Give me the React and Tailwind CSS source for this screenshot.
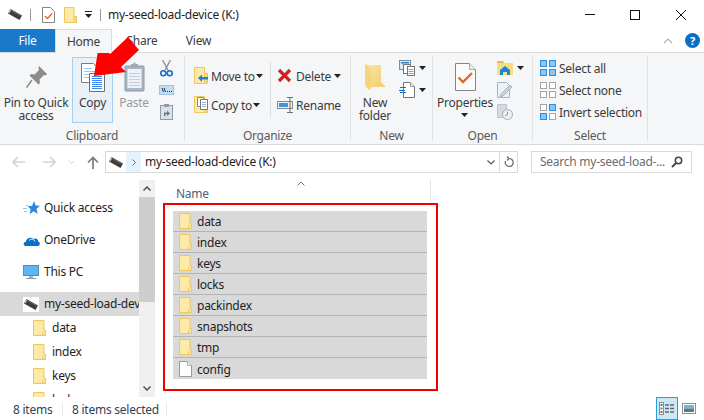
import React from "react";

const Caret = ({ className = "" }) => (
  <svg width="7" height="4" viewBox="0 0 7 4" className={className}><path d="M0 0h7L3.5 4z" fill="#222" /></svg>
);

const Drive = () => (
  <svg width="14" height="11" viewBox="0 0 14 11" className="shrink-0">
    <path d="M2.500 0L14 6.500 11.500 11 0 4.500z" fill="#3c3c3c" />
    <path d="M4 2L12.500 6.800" stroke="#6a6a6a" strokeWidth="1" />
    <path d="M.8 4.200L2.800 .8" stroke="#b5b5b5" strokeWidth="1.400" />
  </svg>
);

const SmallFolder = () => (
  <svg width="13" height="16" viewBox="0 0 13 16">
    <path d="M.5.5h10.500v15H.5z" fill="#fdeaa8" stroke="#efc75e" />
    <path d="M11 10.500h1.500v5H9.500v-3" fill="#fbe39a" stroke="#efc75e" />
  </svg>
);

const SmallFile = () => (
  <svg width="13" height="16" viewBox="0 0 13 16">
    <path d="M.5.5h8l4 4v11H.5z" fill="#fff" stroke="#9a9a9a" />
    <path d="M8.500.5v4h4" fill="#eee" stroke="#b5b5b5" />
  </svg>
);

const CopyIcon = () => (
  <svg width="24" height="29" viewBox="0 0 24 29">
    <path d="M.5.5h12l4 4v15H.5z" fill="#fff" stroke="#7d7d7d" />
    <path d="M3 5.500h8M3 8.500h11M3 11.500h11M3 14.500h11" stroke="#9cc3ee" />
    <path d="M8.500 10.500h15v18h-15z" fill="#fff" stroke="#6f6f6f" />
    <path d="M11 13.500h10M11 15.500h10M11 17.500h10M11 19.500h10M11 21.500h10M11 23.500h10M11 25.500h10" stroke="#3f86ee" />
  </svg>
);

const PasteIcon = () => (
  <svg width="21" height="30" viewBox="0 0 21 30">
    <rect x="1" y="4" width="19" height="25" rx="1" fill="#a9b6c6" stroke="#8496ab" />
    <rect x="3.500" y="7" width="14" height="19" fill="#eef1f6" />
    <path d="M5 11.500h11M5 14.500h11M5 17.500h11M5 20.500h11M5 23.500h11" stroke="#c8d0dc" />
    <path d="M7 4V2h2.500V.5h2V2H14v3.500H7z" fill="#a2a9b3" />
  </svg>
);

const Pin = () => (
  <svg width="21" height="22" viewBox="0 0 21 22">
    <path d="M13 0l8 8-1.500 1.500-1.500-.5-4.500 4.500.5 3.500-1.500 1.500L3.500 9.500 5 8l3.500.5L13 4l-.5-1.500z" fill="#8c8c8c" />
    <path d="M6 14L.5 21.500" stroke="#8c8c8c" strokeWidth="1.500" />
  </svg>
);

const Scissors = () => (
  <svg width="13" height="17" viewBox="0 0 13 17">
    <path d="M2.500 0L8 10M10.500 0L5 10" stroke="#8a8a8a" strokeWidth="1.300" fill="none" />
    <circle cx="3.300" cy="13.300" r="2.500" fill="none" stroke="#1b6fc0" strokeWidth="1.600" />
    <circle cx="9.700" cy="13.300" r="2.500" fill="none" stroke="#1b6fc0" strokeWidth="1.600" />
  </svg>
);

const PathIcon = () => (
  <svg width="15" height="10" viewBox="0 0 15 10">
    <rect x=".5" y=".5" width="14" height="9" fill="#c3dcf5" stroke="#9cc3ea" />
    <path d="M3 3l1.500 4M5 3l1.500 4" stroke="#222" strokeWidth=".9" />
    <path d="M8 6.500h1M10 6.500h1M12 6.500h1" stroke="#333" />
  </svg>
);

const PasteShortcut = () => (
  <svg width="13" height="16" viewBox="0 0 13 16">
    <rect x=".5" y="1.500" width="12" height="14" fill="#dde2e9" stroke="#8e9cae" />
    <rect x="4" y="0" width="5" height="3" fill="#8e9cae" />
    <path d="M4 12V8.500h3V6.500l3 3-3 2.500V10H5.500v2z" fill="#64788f" />
  </svg>
);

const MoveTo = () => (
  <svg width="14" height="17" viewBox="0 0 14 17">
    <path d="M.5.5h10v16H.5z" fill="#fdeaa8" stroke="#efc75e" />
    <path d="M10.500 6.500h3v10h-3" fill="#f7d878" stroke="#efc75e" />
    <path d="M4 11l4-3.500V10h6v2.500H8V15z" fill="#2a7fd0" />
  </svg>
);

const CopyTo = () => (
  <svg width="14" height="17" viewBox="0 0 14 17">
    <path d="M.5.5h10v16H.5z" fill="#fdeaa8" stroke="#efc75e" />
    <path d="M10.500 6.500h3v10h-3" fill="#f7d878" stroke="#efc75e" />
    <path d="M3.500 1.500h6v9h-6z" fill="#fff" stroke="#888" />
    <path d="M6.500 3.500h7v10h-7z" fill="#fff" stroke="#777" />
    <path d="M8 6.500h4M8 8.500h4M8 10.500h4" stroke="#9ab7d8" />
  </svg>
);

const DeleteX = () => (
  <svg width="15" height="15" viewBox="0 0 15 15">
    <path d="M2 2l11 11M13 2L2 13" stroke="#d61f1f" strokeWidth="3.200" />
  </svg>
);

const Rename = () => (
  <svg width="17" height="16" viewBox="0 0 17 16">
    <rect x=".5" y="4.500" width="15" height="7" fill="#f1f1f1" stroke="#8a8a8a" />
    <rect x="2" y="6" width="9" height="4" fill="#3d93e6" />
    <path d="M10 .5h6M13 .5v15M10 15.500h6" stroke="#6d6d6d" fill="none" />
  </svg>
);

const NewFolder = () => (
  <svg width="21" height="28" viewBox="0 0 21 28">
    <defs>
      <linearGradient id="nf" x1="0" y1="0" x2="1" y2="1">
        <stop offset="0" stopColor="#fbe7a5" />
        <stop offset="1" stopColor="#f1cb69" />
      </linearGradient>
    </defs>
    <path d="M0 1l4 1h12v17l5 5H6l-2 3-4-4z" fill="url(#nf)" />
    <path d="M0 1l6 5v21l-6-6z" fill="#f4d47e" />
  </svg>
);

const NewItem = () => (
  <svg width="16" height="16" viewBox="0 0 16 16">
    <rect x=".5" y=".5" width="11" height="9" fill="#dbe9f7" stroke="#6f8fae" />
    <rect x="2" y="2" width="8" height="1.500" fill="#3a7fc2" />
    <rect x="4.500" y="4.500" width="7" height="9" fill="#fff" stroke="#777" />
    <rect x="8.500" y="6.500" width="7" height="9" fill="#fff" stroke="#777" />
    <path d="M9.500 9.500h5M9.500 11.500h5M9.500 13.500h5" stroke="#d08a7a" />
  </svg>
);

const NewDoc = () => (
  <svg width="16" height="16" viewBox="0 0 16 16">
    <path d="M4.500.5h7l4 4v11h-11z" fill="#fff" stroke="#777" />
    <path d="M11.500.5v4h4" fill="#eee" stroke="#999" />
    <path d="M1 5.500h6M0 8.500h6M1 10.500h6" stroke="#1f6fbf" />
  </svg>
);

const Properties = () => (
  <svg width="21" height="28" viewBox="0 0 21 28">
    <path d="M.5.5h14l6 6v21H.5z" fill="#fbfbfb" stroke="#858585" />
    <path d="M14.500.5v6h6" fill="#eee" stroke="#aaa" />
    <path d="M3.500 14.500l4.500 4.500 9-9" fill="none" stroke="#e8642c" strokeWidth="2.400" />
  </svg>
);

const OpenIcon = () => (
  <svg width="16" height="14" viewBox="0 0 16 14">
    <path d="M0 0h6l1 2h9v12H0z" fill="#f9dc7f" />
    <path d="M0 0h6l1 2H0z" fill="#e9bd4b" />
    <path d="M3 9l5-4 5 4v5h-3v-3H6v3H3z" fill="#1a84d8" />
  </svg>
);

const EditIcon = () => (
  <svg width="16" height="16" viewBox="0 0 16 16">
    <path d="M.5.5h9l3 3v12H.5z" fill="#eef1f5" stroke="#a9b4c2" />
    <path d="M4 12l9-9 2 2-9 9-3 1z" fill="#c6d2e0" stroke="#a9b4c2" />
  </svg>
);

const HistoryIcon = () => (
  <svg width="16" height="16" viewBox="0 0 16 16">
    <path d="M.5.5h9v13h-9z" fill="#d5dbe3" stroke="#bcc5d0" />
    <circle cx="10.500" cy="10.500" r="5" fill="#eef0f3" stroke="#a4acb6" />
    <path d="M10.500 7.500v3l-2.500 1.500" stroke="#8d96a1" fill="none" />
  </svg>
);

const Grid4 = ({ on }) => (
  <svg width="16" height="16" viewBox="0 0 16 16" className="shrink-0">
    {[[0, 0], [9, 0], [0, 9], [9, 9]].map(([x, y], i) =>
      on[i] ? (
        <rect key={i} x={x + 0.5} y={y + 0.5} width="6" height="6" fill="#8cc4f2" stroke="#2f8fdf" />
      ) : (
        <rect key={i} x={x + 0.5} y={y + 0.5} width="6" height="6" fill="#fff" stroke="#a5a5a5" />
      )
    )}
  </svg>
);

const Star = () => (
  <svg width="17" height="15" viewBox="0 0 17 15">
    <path d="M11 0l1.600 4.400 4.400.3-3.500 3 1.200 5.300-4-2.700-4.200 3 1.200-5-3-3 4.500-.5z" fill="#2b86dc" />
    <path d="M0 7.500h4M1 10.500h3M3 4.500h2" stroke="#8fc1ee" />
  </svg>
);

const Cloud = () => (
  <svg width="17" height="11" viewBox="0 0 17 11">
    <path d="M2.500 11C0 11 0 7 2.800 6.800 3.500 3 8 1.500 10.500 4c2.500-1.500 5 0 4.500 2.500 2.500.5 2.500 4.500-.5 4.500z" fill="#0a6fc8" />
    <path d="M6 5.500C8 3.500 11 4 12 6.500" stroke="#fff" fill="none" />
  </svg>
);

const Monitor = () => (
  <svg width="16" height="15" viewBox="0 0 16 15">
    <rect x=".5" y=".5" width="15" height="10" fill="#5cb8f2" stroke="#6f8698" />
    <path d="M6 11h4v2H6z" fill="#9eb0bf" />
    <path d="M3 13.500h10" stroke="#8b9dac" />
  </svg>
);

const Arrow = ({ flip }) => (
  <svg width="14" height="12" viewBox="0 0 14 12" className={flip ? "-scale-x-100" : ""}>
    <path d="M1 6h12M6 1L1 6l5 5" stroke="#d4d4d4" strokeWidth="1.600" fill="none" />
  </svg>
);

const Group = ({ w, label, children }) => (
  <div className={`flex flex-col h-[86px] mt-[2px] border-r border-[#e2e3e4] ${w}`}>
    <div className="flex h-[74px]">{children}</div>
    <div className="h-[12px] leading-[14px] text-center text-[#5a5a5a]">{label}</div>
  </div>
);

const Large = ({ w, icon, lines, active, muted, caret }) => (
  <div className={`${w} h-[66px] mt-[2px] flex flex-col items-center border ${active ? "bg-[#e8f0f8] border-[#a3cff3]" : "border-transparent"}`}>
    <div className="h-[38px] flex items-center justify-center shrink-0">{icon}</div>
    <div className={`text-center leading-[13px] whitespace-nowrap ${muted ? "text-[#9a9a9a]" : "text-[#3b3b3b]"}`}>
      {lines.map((l) => (
        <div key={l}>{l}</div>
      ))}
      {caret && <Caret className="mx-auto mt-[4px]" />}
    </div>
  </div>
);

const Stack = ({ children, className = "" }) => (
  <div className={`flex flex-col pt-[2px] ${className}`}>{children}</div>
);

const Cell = ({ children, className = "" }) => (
  <div className={`h-[22px] flex items-center ${className}`}>{children}</div>
);

const Wide = ({ icon, label, caret, iconW }) => (
  <div className="h-[29px] flex items-center whitespace-nowrap text-[#3b3b3b]">
    <div className={`${iconW} shrink-0 flex`}>{icon}</div>
    <span className="mt-[2px]">{label}</span>
    {caret && <Caret className={caret} />}
  </div>
);

const NavItem = ({ icon, label, iconW = "w-[21px]", className = "", pad = "pl-[23px]" }) => (
  <div className={`h-[24px] shrink-0 flex items-center whitespace-nowrap text-[#1e1e1e] ${pad} ${className}`}>
    <span className={`${iconW} shrink-0 flex`}>{icon}</span>
    <span>{label}</span>
  </div>
);

const files = ["data", "index", "keys", "locks", "packindex", "snapshots", "tmp", "config"];

export default function App() {
  return (
    <div
      className="relative w-[704px] h-[420px] overflow-hidden bg-white text-[12px] tracking-[-0.25px] text-[#1e1e1e]"
      style={{ fontFamily: '"Noto Sans", sans-serif' }}
    >
      {/* Title bar */}
      <div className="flex items-center h-[29px]">
        <div className="ml-[8px] flex"><Drive /></div>
        <div className="ml-[8px] w-px h-[12px] bg-[#9a9a9a]" />
        <div className="ml-[11px] flex"><svg width="13" height="16" viewBox="0 0 13 16"><path d="M.5.5h8l4 4v11H.5z" fill="#fff" stroke="#858585" /><path d="M3 9l2.500 2.500L10 6.500" stroke="#e8642c" strokeWidth="1.500" fill="none" /></svg></div>
        <div className="ml-[9px] flex"><svg width="13" height="16" viewBox="0 0 13 16"><path d="M.5.5h9.500v15H.5z" fill="#fdeaa8" stroke="#efc75e" /><path d="M10 9.500h2.500v6H10" fill="#f7d878" stroke="#efc75e" /></svg></div>
        <div className="ml-[8px] flex flex-col items-center gap-[2px]">
          <div className="w-[7px] h-px bg-[#222]" />
          <Caret />
        </div>
        <div className="ml-[8px] w-px h-[12px] bg-[#9a9a9a]" />
        <div className="ml-[7px] text-[#1e1e1e]">my-seed-load-device (K:)</div>
        <div className="ml-auto flex items-center">
          <div className="w-[10px] h-px bg-[#111]" />
          <div className="ml-[35px] w-[10px] h-[10px] border border-[#111]" />
          <svg className="ml-[36px] mr-[18px]" width="10" height="10" viewBox="0 0 10 10"><path d="M0 0l10 10M10 0L0 10" stroke="#111" /></svg>
        </div>
      </div>

      {/* Tabs */}
      <div className="flex h-[23px] items-stretch">
        <div className="w-[55px] bg-[#1979ca] text-white flex items-center justify-center">File</div>
        <div className="relative z-10 w-[57px] h-[24px] bg-[#f5f6f7] border-x border-t border-[#dadbdc] flex items-center justify-center text-[#3b3b3b]">Home</div>
        <div className="w-[60px] flex items-center justify-center text-[#3b3b3b]">Share</div>
        <div className="w-[53px] flex items-center justify-center text-[#3b3b3b]">View</div>
        <div className="ml-auto flex items-center mr-[4px]">
          <svg width="10" height="6" viewBox="0 0 10 6"><path d="M1 5l4-4 4 4" stroke="#b5b5b5" strokeWidth="1.200" fill="none" /></svg>
          <div className="ml-[12px] w-[15px] h-[15px] rounded-full bg-[#0a6fc2] text-white font-bold text-[11px] leading-[15px] text-center">?</div>
        </div>
      </div>

      {/* Ribbon */}
      <div className="flex h-[93px] bg-[#f5f6f7] border-y border-[#dadbdc]">
        <Group w="w-[185px]" label="Clipboard">
          <Large w="w-[72px]" icon={<Pin />} lines={["Pin to Quick", "access"]} />
          <Large w="w-[41px]" icon={<CopyIcon />} lines={["Copy"]} active />
          <Large w="w-[42px]" icon={<PasteIcon />} lines={["Paste"]} muted />
          <Stack className="w-[22px] items-center">
            <Cell><Scissors /></Cell>
            <Cell><PathIcon /></Cell>
            <Cell><PasteShortcut /></Cell>
          </Stack>
        </Group>
        <Group w="w-[166px]" label="Organize">
          <div className="w-[85px] pl-[9px] pt-[6px] flex flex-col">
            <Wide iconW="w-[17px]" icon={<MoveTo />} label="Move to" caret="ml-[1px]" />
            <Wide iconW="w-[17px]" icon={<CopyTo />} label="Copy to" caret="ml-[1px]" />
          </div>
          <div className="w-px h-[55px] mt-[7px] bg-[#dcdddf]" />
          <div className="pl-[6px] pt-[6px] flex flex-col">
            <Wide iconW="w-[19px]" icon={<DeleteX />} label="Delete" caret="ml-[3px]" />
            <Wide iconW="w-[19px]" icon={<Rename />} label="Rename" />
          </div>
        </Group>
        <Group w="w-[82px]" label="New">
          <Large w="w-[48px]" icon={<NewFolder />} lines={["New", "folder"]} />
          <Stack>
            <Cell className="gap-[4px]"><NewItem /><Caret /></Cell>
            <Cell className="gap-[4px]"><NewDoc /><Caret /></Cell>
          </Stack>
        </Group>
        <Group w="w-[100px]" label="Open">
          <Large w="w-[64px]" icon={<Properties />} lines={["Properties"]} caret />
          <Stack>
            <Cell className="gap-[4px]"><OpenIcon /><Caret /></Cell>
            <Cell><EditIcon /></Cell>
            <Cell><HistoryIcon /></Cell>
          </Stack>
        </Group>
        <Group w="w-[115px]" label="Select">
          <Stack className="pl-[7px] text-[#3b3b3b] whitespace-nowrap">
            <Cell className="gap-[3px]"><Grid4 on={[1, 1, 1, 1]} /><span className="mt-[2px]">Select all</span></Cell>
            <Cell className="gap-[3px]"><Grid4 on={[0, 0, 0, 0]} /><span className="mt-[2px]">Select none</span></Cell>
            <Cell className="gap-[3px]"><Grid4 on={[0, 1, 1, 0]} /><span className="mt-[2px]">Invert selection</span></Cell>
          </Stack>
        </Group>
      </div>

      {/* Address row */}
      <div className="flex items-start h-[35px] pt-[6px]">
        <div className="w-[105px] h-[22px] flex items-center shrink-0">
          <div className="ml-[12px] flex"><Arrow /></div>
          <div className="ml-[16px] flex"><Arrow flip /></div>
          <svg className="ml-[12px]" width="7" height="4" viewBox="0 0 7 4"><path d="M.5.5l3 3 3-3" stroke="#d4d4d4" fill="none" /></svg>
          <svg className="ml-[12px]" width="12" height="13" viewBox="0 0 12 13"><path d="M6 13V1.500M1 6.500l5-5 5 5" stroke="#7a7a7a" strokeWidth="1.700" fill="none" /></svg>
        </div>
        <div className="w-[413px] h-[22px] border border-[#d9d9d9] flex items-stretch">
          <div className="w-[20px] flex items-center justify-center"><Drive /></div>
          <div className="w-[15px] bg-[#e5f3ff] flex items-center justify-center">
            <svg width="4" height="7" viewBox="0 0 4 7"><path d="M.5.5l3 3-3 3" stroke="#666" fill="none" /></svg>
          </div>
          <div className="pl-[4px] flex items-center text-[#1e1e1e]">my-seed-load-device (K:)</div>
          <div className="ml-auto flex items-center">
            <svg width="8" height="5" viewBox="0 0 8 5"><path d="M.5.5L4 4 7.500.5" stroke="#555" strokeWidth="1.200" fill="none" /></svg>
            <div className="ml-[4px] w-px h-full bg-[#d9d9d9]" />
            <svg className="ml-[4px] mr-[3px]" width="10" height="12" viewBox="0 0 10 12"><path d="M5 2.500A4 4 0 1 1 1.500 5M3 .5L5 2.500 3 4.500" stroke="#666" strokeWidth="1.200" fill="none" /></svg>
          </div>
        </div>
        <div className="ml-[13px] w-[161px] h-[22px] border border-[#d9d9d9] flex items-center pl-[8px] text-[#6d6d6d]">
          <span>Search my-seed-load-...</span>
          <svg className="ml-auto mr-[8px]" width="12" height="12" viewBox="0 0 12 12"><circle cx="7.500" cy="4.500" r="3.200" stroke="#444" strokeWidth="1.500" fill="none" /><path d="M5 7L1 11" stroke="#444" strokeWidth="1.800" /></svg>
        </div>
      </div>

      {/* Body */}
      <div className="flex h-[217px]">
        <div className="w-[139px] shrink-0 overflow-hidden pt-[16px] flex flex-col">
          <NavItem icon={<Star />} label="Quick access" />
          <NavItem className="mt-[8px]" icon={<Cloud />} label="OneDrive" />
          <NavItem className="mt-[8px]" icon={<Monitor />} label="This PC" />
          <NavItem
            className="mt-[8px] bg-[#d9d9d9]"
            icon={<span className="w-[16px] h-[15px] bg-white flex items-center justify-center"><Drive /></span>}
            label="my-seed-load-device (K:)"
          />
          {["data", "index", "keys", "locks"].map((f) => (
            <NavItem key={f} pad="pl-[33px]" iconW="w-[19px]" icon={<SmallFolder />} label={f} />
          ))}
        </div>
        <div className="w-[16px] shrink-0 bg-[#f0f0f0] flex flex-col">
          <div className="h-[17px] flex items-center justify-center">
            <svg width="8" height="5" viewBox="0 0 8 5"><path d="M.5 4.500L4 1l3.500 3.500" stroke="#505050" strokeWidth="1.500" fill="none" /></svg>
          </div>
          <div className="h-[105px] bg-[#cdcdcd]" />
          <div className="flex-1" />
          <div className="h-[17px] flex items-center justify-center">
            <svg width="8" height="5" viewBox="0 0 8 5"><path d="M.5.5L4 4 7.500.5" stroke="#505050" strokeWidth="1.500" fill="none" /></svg>
          </div>
        </div>
        <div className="flex-1 min-w-0">
          <div className="w-[276px] h-[23px] border-r border-[#e5e5e5] pl-[21px] flex items-start">
            <span className="mt-[5px] text-[#4c607a]">Name</span>
            <svg className="ml-[88px] mt-[1px]" width="8" height="5" viewBox="0 0 8 5"><path d="M.5 4.500L4 1l3.500 3.500" stroke="#777" fill="none" /></svg>
          </div>
          <div className="ml-[8px] w-[275px] border-2 border-[#f00000] pt-[6px] pl-[8px] pr-[9px] pb-[10px]">
            {files.map((f, i) => (
              <div
                key={f}
                className={`h-[21px] bg-[#d9d9d9] flex items-center pl-[6px] text-[#1e1e1e] ${i < 7 ? "border-b border-[#b4b4b4]" : ""}`}
              >
                <span className="w-[18px] flex">{f === "config" ? <SmallFile /> : <SmallFolder />}</span>
                <span className="mt-[2px]">{f}</span>
              </div>
            ))}
          </div>
        </div>
      </div>

      {/* Status bar */}
      <div className="flex items-center h-[23px] text-[#33415a]">
        <span className="ml-[13px] w-[49px] mt-[2px]">8 items</span>
        <div className="w-px h-[12px] bg-[#e5e5e5]" />
        <span className="ml-[9px] w-[94px] whitespace-nowrap mt-[2px]">8 items selected</span>
        <div className="w-px h-[12px] bg-[#e5e5e5]" />
        <div className="ml-auto flex items-center mr-[8px]">
          <div className="w-[22px] h-[23px] border border-[#26a0da] bg-[#cbe8f6] flex items-center justify-center">
            <svg width="16" height="13" viewBox="0 0 16 13">
              <rect x=".5" y=".5" width="4" height="12" fill="#fff" stroke="#8a8a8a" />
              <rect x="1.500" y="2" width="2" height="2" fill="#6a6a6a" />
              <rect x="1.500" y="5.500" width="2" height="2" fill="#3d8edb" />
              <rect x="1.500" y="9" width="2" height="2" fill="#d0423a" />
              <path d="M6 3h4M11 3h4M6 6.500h4M11 6.500h4M6 10h4M11 10h4" stroke="#6a6a6a" strokeWidth="1.300" />
            </svg>
          </div>
          <div className="ml-[4px] w-[14px] flex">
            <svg width="14" height="11" viewBox="0 0 14 11">
              <rect x=".5" y=".5" width="13" height="10" fill="#fff" stroke="#8f8f8f" />
              <rect x="2" y="2" width="10" height="3.500" fill="#6fb4ec" />
              <rect x="2" y="5.500" width="10" height="3.500" fill="#5c7f63" />
            </svg>
          </div>
        </div>
      </div>

      {/* Red annotation arrow */}
      <svg className="absolute left-[90px] top-[35px]" width="52" height="44" viewBox="90 35 52 44">
        <path d="M94 76L99 44 110 54 128 37 139 50 121 67 126 72z" fill="#ff0000" />
      </svg>
    </div>
  );
}
